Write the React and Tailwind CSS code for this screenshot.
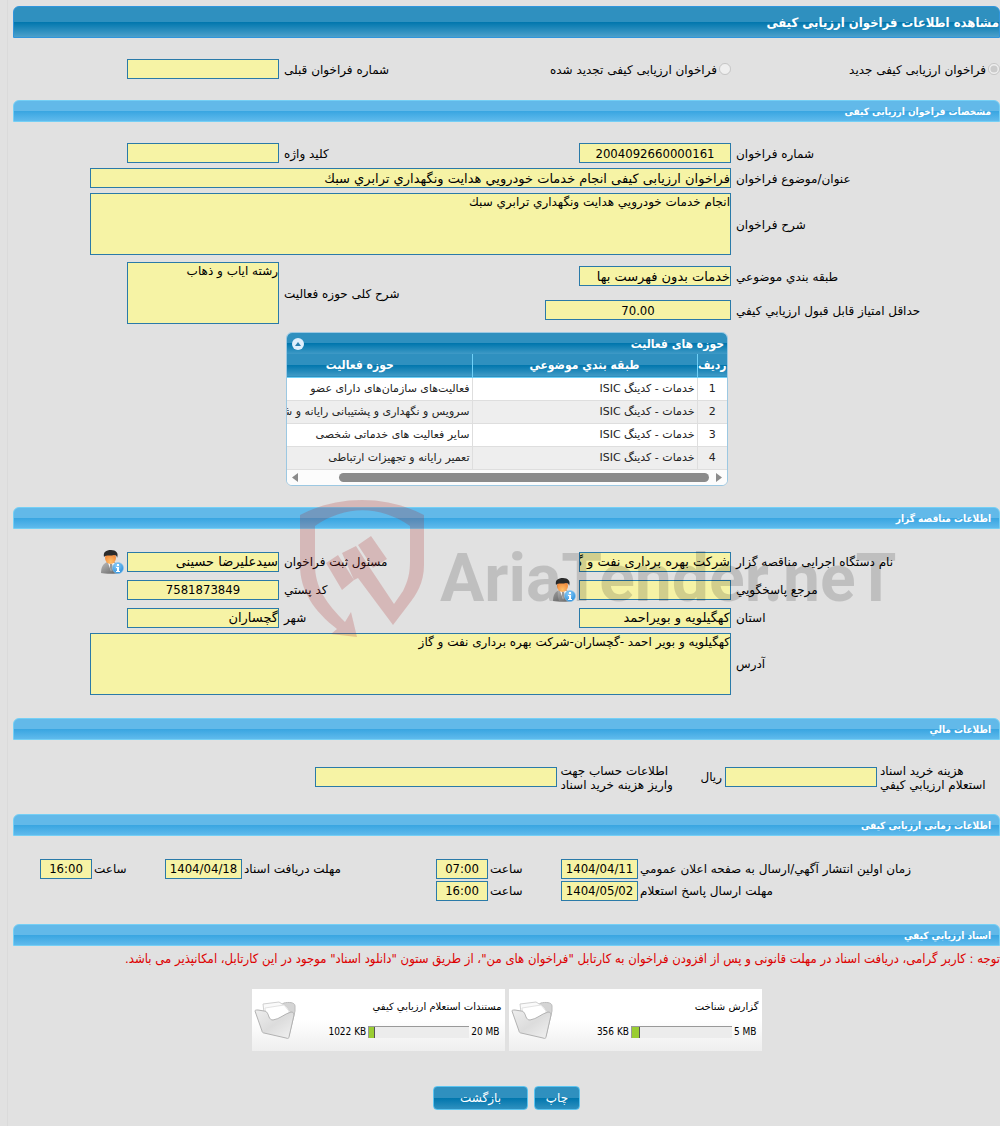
import React from 'react';

const ACTIVITIES = [
    'فعالیت‌های سازمان‌های دارای عضو',
    'سرویس و نگهداری و پشتیبانی رایانه و شبکه',
    'سایر فعالیت های خدماتی شخصی',
    'تعمیر رایانه و تجهیزات ارتباطی',
];

const WIDE = "font-['DejaVu_Sans',sans-serif]";
const NARROW = "font-['DejaVu_Sans_Condensed','DejaVu_Sans',sans-serif]";
const BOX = 'block border border-[#2a7aa8] bg-[#f6f3a5] text-black outline-none';
const FORM_GRID = 'grid grid-cols-[264px_1fr_120px_266px] gap-x-[5px] items-center';

function SectionBar({ children }) {
    return (
        <h2 className="h-[22px] rounded-t-md border border-[#74cff5] bg-[linear-gradient(#62b9e9_50%,#38a5e1_50%,#5fbaec)] pr-2 text-[10px] leading-[21px] font-bold text-white">
            {children}
        </h2>
    );
}

function Label({ id, children }) {
    return (
        <label htmlFor={id} className={`block pt-px text-left text-[12px] leading-[14px] whitespace-nowrap ${WIDE}`}>
            {children}
        </label>
    );
}

function Field({ id, value = '', className = 'w-[152px]' }) {
    return <input id={id} readOnly defaultValue={value} className={`${BOX} ${WIDE} h-5 text-[13px] leading-[18px] ${className}`} />;
}

/* Numbers and dates are centred and set in the narrower face */
function NumberField({ id, value, className = 'w-[152px]' }) {
    return <input id={id} readOnly defaultValue={value} className={`${BOX} ${NARROW} h-5 text-center text-[13px] leading-[18px] ${className}`} />;
}

function Area({ id, value, className }) {
    return <textarea id={id} readOnly defaultValue={value} className={`${BOX} ${WIDE} h-[62px] resize-none text-[12px] leading-[16px] ${className}`} />;
}

function PersonIcon() {
    return (
        <svg width="24" height="26" viewBox="0 0 24 26" aria-hidden="true">
            <defs>
                <linearGradient id="suit" x1="0" y1="0" x2="1" y2="1">
                    <stop offset="0" stopColor="#bdbdbd" />
                    <stop offset="1" stopColor="#5e5e5e" />
                </linearGradient>
                <radialGradient id="face" cx="0.5" cy="0.8" r="0.7">
                    <stop offset="0" stopColor="#ffc06a" />
                    <stop offset="1" stopColor="#f08235" />
                </radialGradient>
                <radialGradient id="info" cx="0.4" cy="0.3" r="0.8">
                    <stop offset="0" stopColor="#8fd0fb" />
                    <stop offset="1" stopColor="#1f86d6" />
                </radialGradient>
            </defs>
            <path d="M1 24c0-6 2-9 6-11h7c4 2 6 5 6 11-3 1-16 1-19 0Z" fill="url(#suit)" />
            <path d="M8 14l3 8 4-8Z" fill="#f4f4f4" />
            <path d="M10 15h2l1 4-2 4-1-4Z" fill="#999" />
            <ellipse cx="10.500" cy="9" rx="5.500" ry="6" fill="url(#face)" />
            <path d="M4 8C3 3 6 1 11 1s8 3 6 8c0-2-1-3-3-3-3 1-6 0-9 1Z" fill="#2b2b2b" />
            <circle cx="18" cy="19" r="5.500" fill="url(#info)" stroke="#8cc6f0" strokeWidth="0.6" />
            <path d="M17 15h2v2h-2zM16 18h3v4h1v1h-4v-1h1v-3h-1Z" fill="#fff" />
        </svg>
    );
}

function FolderIcon() {
    return (
        <svg width="44" height="40" viewBox="-1 -1 44 40" aria-hidden="true">
            <defs>
                <linearGradient id="folder" x1="0" y1="0" x2="1" y2="1">
                    <stop offset="0" stopColor="#eeeeee" />
                    <stop offset="0.5" stopColor="#dcdcdc" />
                    <stop offset="1" stopColor="#f2f2f2" />
                </linearGradient>
            </defs>
            <path d="M24 4l5-3c4-1 11-1 11 3v5l-6 25-8-8Z" fill="#d4d4d4" stroke="#bcbcbc" />
            <path d="M8 2l16-2 8 5 4 6-3 16-22 1Z" fill="#fafafa" stroke="#d0d0d0" />
            <path d="M10 6l19-3 5 6-2 14-20 2Z" fill="#fff" stroke="#e3e3e3" />
            <path d="M0 9c0-1 1-1 3-1l6 1c3 0 4 3 5 6 1 2 2 3 4 3 7-1 11-6 18-8 2 0 3 1 3 3l-5 22c0 1-1 2-3 1L9 31c-1 0-2-1-2-2Z" fill="url(#folder)" stroke="#b2b2b2" />
        </svg>
    );
}

function Watermark() {
    return (
        <div dir="ltr" aria-hidden="true" className="pointer-events-none absolute top-[499px] left-[300px] z-10 flex">
            <svg width="125" height="140" viewBox="0 0 125 140" fill="rgb(175 40 40 / 0.22)">
                <path d="M0 16C38-4 86-4 124 16V66C124 84 116 96 109 105L93 126 58 79 54 81 42 54 56 47 70 69 94 105 103 92C108 82 110 74 110 62V27C80 6 45 6 15 27V66C15 88 26 104 45 123L51 113 57 138 31 135 37 130C14 112 0 92 0 66Z" />
                <path d="M26 64L38 56 54 81 42 91ZM58 46L71 37 87 60 73 69Z" />
            </svg>
            <span className="pt-[10px] pl-[15px] font-[Roboto,sans-serif] text-[66px] leading-[140px] font-bold text-black/15">
                AriaTender.neT
            </span>
        </div>
    );
}

function ActivityTable() {
    return (
        <section className="mt-[8px] mr-auto ml-[273px] w-[442px] overflow-hidden rounded-md border border-[#9cc8e2] bg-white">
            <div className="flex h-[21px] items-center justify-between bg-[linear-gradient(#2f90bf_50%,#0076ad_50%,#3f9ac6)] pr-[3px] pl-[5px] text-white">
                <h3 className="text-[12px] leading-[20px] font-bold">حوزه های فعالیت</h3>
                <button type="button" aria-label="بستن جدول" className="flex size-3 items-center justify-center rounded-full bg-[#dfeffc]">
                    <svg width="6" height="4" viewBox="0 0 6 4"><path d="M0 4l3-4 3 4Z" fill="#2b7fae" /></svg>
                </button>
            </div>
            <div className="overflow-hidden">
                <table className={`w-[479px] table-fixed border-collapse text-[11px] leading-[16px] whitespace-nowrap text-[#222] ${WIDE}`}>
                    <thead>
                        <tr className={`h-[23px] border-b border-[#6fd0f7] bg-[linear-gradient(#2f90bf_50%,#0076ad_50%,#3f9ac6)] text-[12px] text-white ${NARROW}`}>
                            <th className="w-[30px] border-l border-[#6fd0f7] p-0">ردیف</th>
                            <th className="w-[225px] border-l border-[#6fd0f7] p-0">طبقه بندي موضوعي</th>
                            <th className="p-0">حوزه فعالیت</th>
                        </tr>
                    </thead>
                    <tbody>
                        {ACTIVITIES.map((name, i) => (
                            <tr key={name} className="h-[23px] border-b border-[#dedede] odd:bg-white even:bg-[#eeeeee]">
                                <td className="border-l border-[#dedede] p-0 text-center">{i + 1}</td>
                                <td className="border-l border-[#dedede] py-0 pr-[2px]">خدمات - كدینگ ISIC</td>
                                <td className="py-0 pr-[2px]">{name}</td>
                            </tr>
                        ))}
                    </tbody>
                </table>
            </div>
            <div className="flex h-[15px] items-center bg-[#fcfcfc] px-[5px]">
                <svg width="6" height="9" viewBox="0 0 6 9"><path d="M0 0l6 4.500L0 9Z" fill="#8b8b8b" /></svg>
                <div className="mr-[7px] h-[9px] w-[370px] rounded-full bg-[#8b8b8b]" />
                <svg className="mr-auto" width="6" height="9" viewBox="0 0 6 9"><path d="M6 0L0 4.500 6 9Z" fill="#8b8b8b" /></svg>
            </div>
        </section>
    );
}

function DateTime({ id, label, date, time, labelClass }) {
    return (
        <div className="flex items-center gap-[2px]">
            <div className={labelClass}><Label id={id}>{label}</Label></div>
            <NumberField id={id} value={date} className="w-[77px]" />
            <div className="w-[69px]"><Label id={`${id}-time`}>ساعت</Label></div>
            <NumberField id={`${id}-time`} value={time} className="w-[52px]" />
        </div>
    );
}

function FileCard({ title, used, limit, percent }) {
    return (
        <div className="flex h-[62px] w-[253px] justify-between bg-linear-to-b from-white from-50% to-[#eeeeee] pt-[10px] pr-[3px] pl-[2px]">
            <div>
                <h3 className={`text-[10px] leading-[16px] ${WIDE}`}>{title}</h3>
                <div dir="ltr" className="mt-[10px] flex items-center justify-end pr-[2px] text-[10px] leading-[14px]">
                    <span>{used}</span>
                    <div className="mx-[2px] h-3 w-[101px] border-t border-l border-[#999] bg-[#ececec]">
                        <div className="h-full border-r border-[#555] bg-[#9acd32]" style={{ width: `${percent}%` }} />
                    </div>
                    <span>{limit}</span>
                </div>
            </div>
            <div className="pt-[2px]"><FolderIcon /></div>
        </div>
    );
}

function BlueButton({ children, className }) {
    return (
        <button type="button" className={`h-6 rounded border border-[#5cc4f0] bg-[linear-gradient(#2f90bf_50%,#0076ad_50%,#2f90bf)] text-[12px] text-white ${WIDE} ${className}`}>
            {children}
        </button>
    );
}

export default function App() {
    return (
        <div dir="rtl" className={`relative min-h-screen overflow-hidden bg-[#e1e1e1] pl-[7px] text-black ${NARROW}`}>
            <Watermark />
            <main className="min-h-screen border-l border-[#dadada] pt-[6px] pb-4 pl-[5px]">
                <h1 className="h-8 rounded-t-md border border-[#3095dc] bg-[linear-gradient(#2f90bf_50%,#0076ad_50%,#4ca0cb)] text-[13px] leading-[32px] font-bold text-white">
                    مشاهده اطلاعات فراخوان ارزیابی کیفی
                </h1>

                <div className={`${FORM_GRID} mt-[21px] mb-[21px]`}>
                    <div className="flex items-center gap-[2px]">
                        <input type="radio" id="call-new" name="call-type" disabled defaultChecked className="m-0 size-3" />
                        <Label id="call-new">فراخوان ارزیابی کیفی جدید</Label>
                    </div>
                    <div className="flex items-center gap-[2px]">
                        <input type="radio" id="call-renewed" name="call-type" disabled className="m-0 size-3" />
                        <Label id="call-renewed">فراخوان ارزیابی کیفی تجدید شده</Label>
                    </div>
                    <Label id="prev-number">شماره فراخوان قبلی</Label>
                    <Field id="prev-number" />
                </div>

                <SectionBar>مشخصات فراخوان ارزیابی کیفی</SectionBar>
                <div className={`${FORM_GRID} mt-[21px] gap-y-[5px]`}>
                    <Label id="number">شماره فراخوان</Label>
                    <NumberField id="number" value="2004092660000161" />
                    <Label id="keyword">کلید واژه</Label>
                    <Field id="keyword" />

                    <Label id="subject">عنوان/موضوع فراخوان</Label>
                    <div className="col-span-3 ml-[77px]">
                        <Field id="subject" value="فراخوان ارزیابی کیفی انجام خدمات خودرويي هدايت ونگهداري ترابري سبك" className="w-full" />
                    </div>

                    <Label id="description">شرح فراخوان</Label>
                    <div className="col-span-3 ml-[77px]">
                        <Area id="description" value="انجام خدمات خودرويي هدايت ونگهداري ترابري سبك" className="w-full" />
                    </div>
                </div>
                <div className={`${FORM_GRID} mt-[7px]`}>
                    <div className="col-span-2 grid grid-cols-[264px_1fr] items-center gap-x-[5px] gap-y-[14px]">
                        <Label id="category">طبقه بندي موضوعي</Label>
                        <Field id="category" value="خدمات بدون فهرست بها" />
                        <Label id="min-score">حداقل امتیاز قابل قبول ارزیابي کیفي</Label>
                        <NumberField id="min-score" value="70.00" className="w-[186px]" />
                    </div>
                    <Label id="field-summary">شرح کلی حوزه فعالیت</Label>
                    <Area id="field-summary" value="رشته ایاب و ذهاب" className="w-[152px]" />
                </div>

                <ActivityTable />

                <div className="mt-[21px]"><SectionBar>اطلاعات مناقصه گزار</SectionBar></div>
                <div className={`${FORM_GRID} mt-[20px]`}>
                    <Label id="agency">نام دستگاه اجرایی مناقصه گزار</Label>
                    <Field id="agency" value="شرکت بهره برداری نفت و گاز" />
                    <Label id="registrar">مسئول ثبت فراخوان</Label>
                    <div className="flex items-center gap-[3px]">
                        <Field id="registrar" value="سیدعلیرضا حسینی" />
                        <PersonIcon />
                    </div>
                </div>
                <div className={`${FORM_GRID} mt-[2px]`}>
                    <Label id="contact">مرجع پاسخگویي</Label>
                    <div className="flex items-center gap-[3px]">
                        <Field id="contact" />
                        <PersonIcon />
                    </div>
                    <Label id="postal">کد پستي</Label>
                    <NumberField id="postal" value="7581873849" />
                </div>
                <div className={`${FORM_GRID} mt-[5px] gap-y-[5px]`}>
                    <Label id="province">استان</Label>
                    <Field id="province" value="کهگیلویه و بویراحمد" />
                    <Label id="city">شهر</Label>
                    <Field id="city" value="گچساران" />
                    <Label id="address">آدرس</Label>
                    <div className="col-span-3 ml-[77px]">
                        <Area id="address" value="کهگیلویه و بویر احمد -گچساران-شرکت بهره برداری نفت و گاز" className="w-full" />
                    </div>
                </div>

                <div className="mt-[23px]"><SectionBar>اطلاعات مالي</SectionBar></div>
                <div className="mt-[23px] mb-[22px] flex items-center gap-[3px]">
                    <div className="w-[120px]"><Label id="cost">هزینه خرید اسناد<br />استعلام ارزیابي کیفي</Label></div>
                    <Field id="cost" />
                    <span className={`text-[12px] ${WIDE}`}>ریال</span>
                    <div className="w-[137px]"><Label id="account">اطلاعات حساب جهت<br />واریز هزینه خرید اسناد</Label></div>
                    <Field id="account" className="w-[242px]" />
                </div>

                <SectionBar>اطلاعات زمانی ارزیابی کیفی</SectionBar>
                <div className="mt-[23px] mb-[23px] flex flex-col gap-[2px]">
                    <div className="flex">
                        <DateTime id="publish" label="زمان اولین انتشار آگهي/ارسال به صفحه اعلان عمومي" date="1404/04/11" time="07:00" labelClass="w-[360px]" />
                        <DateTime id="receive" label="مهلت دریافت اسناد" date="1404/04/18" time="16:00" labelClass="w-[192px]" />
                    </div>
                    <DateTime id="reply" label="مهلت ارسال پاسخ استعلام" date="1404/05/02" time="16:00" labelClass="w-[360px]" />
                </div>

                <SectionBar>اسناد ارزیابي کیفي</SectionBar>
                <p className="mt-[5px] text-[13px] leading-[16px] whitespace-nowrap text-[#dd0000]">
                    توجه : کاربر گرامی، دریافت اسناد در مهلت قانونی و پس از افزودن فراخوان به کارتابل "فراخوان های من"، از طریق ستون "دانلود اسناد" موجود در این کارتابل، امکانپذیر می باشد.
                </p>

                <div className="mt-[22px] flex justify-center gap-1">
                    <FileCard title="گزارش شناخت" used="356 KB" limit="5 MB" percent={8} />
                    <FileCard title="مستندات استعلام ارزیابي کیفي" used="1022 KB" limit="20 MB" percent={6} />
                </div>

                <div className="mt-[35px] flex justify-center gap-[6px]">
                    <BlueButton className="w-[46px]">چاپ</BlueButton>
                    <BlueButton className="w-[95px]">بازگشت</BlueButton>
                </div>
            </main>
        </div>
    );
}
